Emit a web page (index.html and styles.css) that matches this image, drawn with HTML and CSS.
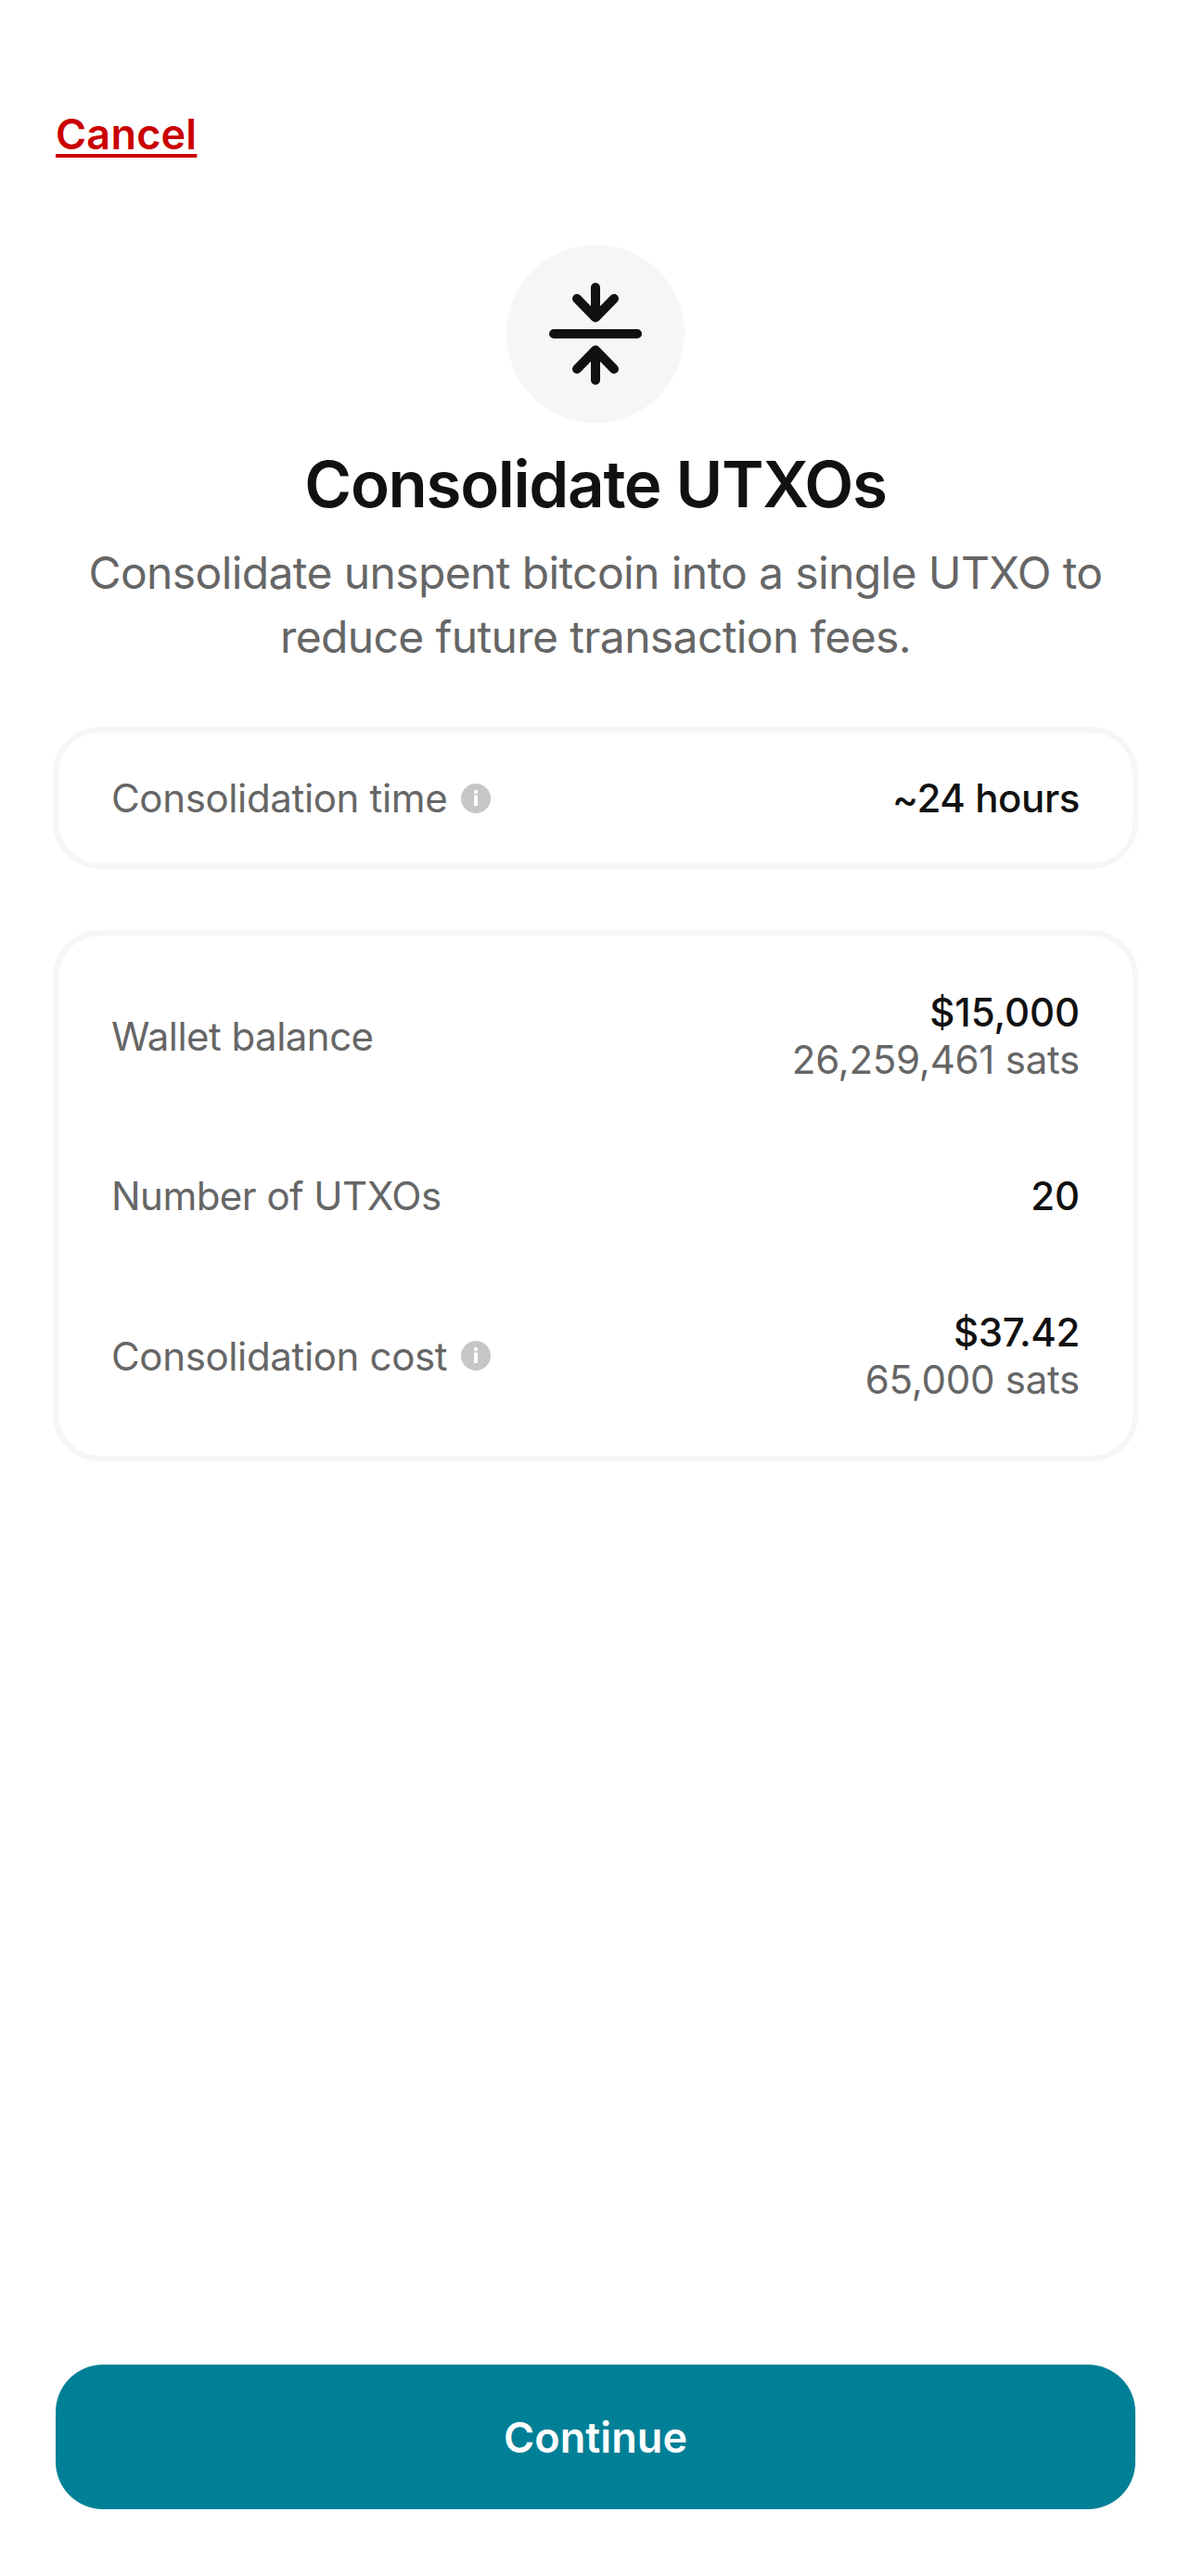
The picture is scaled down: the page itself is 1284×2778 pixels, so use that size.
FILE: index.html
```html
<!DOCTYPE html>
<html lang="en">
<head>
<meta charset="utf-8">
<title>Consolidate UTXOs</title>
<link rel="stylesheet" href="styles.css">
</head>
<body>
<main class="screen">
  <a class="cancel">Cancel</a>
  <header class="intro">
    <div class="badge">
      <svg width="192" height="192" viewBox="0 0 192 192" fill="none" stroke="#111111" stroke-width="10" stroke-linecap="round" stroke-linejoin="round">
        <path d="M51 96H141M96 46V78M76 58L96 78.500L116 58M96 146V114M76 134L96 113.500L116 134"/>
      </svg>
    </div>
    <h1 class="title">Consolidate UTXOs</h1>
    <p class="subtitle">Consolidate unspent bitcoin into a single UTXO to<br>reduce future transaction fees.</p>
  </header>
  <section class="card card-time">
    <div class="row"><span class="label">Consolidation time<svg class="info" viewBox="0 0 32 32"><circle cx="16" cy="16" r="16" fill="#c6c6c6"/><circle cx="16" cy="9" r="2.200" fill="#fff"/><path d="M14 12.500H18V24H14Z" fill="#fff"/></svg></span><span class="value">~24 hours</span></div>
  </section>
  <section class="card card-details">
    <div class="row"><span class="label label-tight">Wallet balance</span><span class="value value-wide">$15,000<small class="sats">26,259,461 sats</small></span></div>
    <div class="row"><span class="label label-tight">Number of UTXOs</span><span class="value value-wide">20</span></div>
    <div class="row"><span class="label">Consolidation cost<svg class="info" viewBox="0 0 32 32"><circle cx="16" cy="16" r="16" fill="#c6c6c6"/><circle cx="16" cy="9" r="2.200" fill="#fff"/><path d="M14 12.500H18V24H14Z" fill="#fff"/></svg></span><span class="value">$37.42<small class="sats">65,000 sats</small></span></div>
  </section>
  <button class="continue">Continue</button>
</main>
</body>
</html>
```
FILE: styles.css
```css
* { box-sizing: border-box; }
body { margin: 0; background: #fff; font-family: Inter, sans-serif; color: #111; }
.screen { width: 1284px; height: 2778px; padding: 109px 60px 72px; display: flex; flex-direction: column; }
.cancel { align-self: flex-start; height: 72px; line-height: 72px; font-size: 45px; font-weight: 600; letter-spacing: 0.2px; color: #ca0000; text-decoration: underline; text-decoration-thickness: 4px; text-underline-offset: 5px; text-decoration-skip-ink: none; }
.intro { display: flex; flex-direction: column; align-items: center; margin-top: 83px; }
.badge { width: 192px; height: 192px; border-radius: 50%; background: #f6f6f6; }
.badge svg { display: block; }
.title { margin: 24px 0 0; font-size: 69px; line-height: 84px; font-weight: 600; letter-spacing: -1.3px; }
.subtitle { margin: 19px 0 0; font-size: 48px; line-height: 69px; letter-spacing: -0.62px; color: #666; text-align: center; white-space: nowrap; }
.card { margin-left: -3px; margin-right: -3px; border: 6px solid #f6f6f6; border-radius: 51px; padding: 0 57px; }
.card-time { height: 153px; margin-top: 63px; display: grid; }
.card-details { height: 573px; margin-top: 66px; display: flex; flex-direction: column; justify-content: space-between; padding-top: 57px; padding-bottom: 57px; }
.row { display: flex; justify-content: space-between; align-items: center; }
.label { display: flex; align-items: center; gap: 15px; font-size: 42px; line-height: 51px; letter-spacing: -0.35px; color: #666; }
.label-tight { letter-spacing: -0.53px; }
.info { width: 32px; height: 32px; }
.value { font-size: 42px; line-height: 51px; font-weight: 500; letter-spacing: -0.4px; text-align: right; }
.value-wide { letter-spacing: -0.1px; }
.sats { display: block; font-size: 42px; font-weight: 400; letter-spacing: -0.25px; color: #666; }
.continue { margin-top: auto; height: 156px; border: 0; border-radius: 51px; background: #008097; color: #fff; font-family: inherit; font-size: 45px; font-weight: 600; letter-spacing: 0.1px; }
```
